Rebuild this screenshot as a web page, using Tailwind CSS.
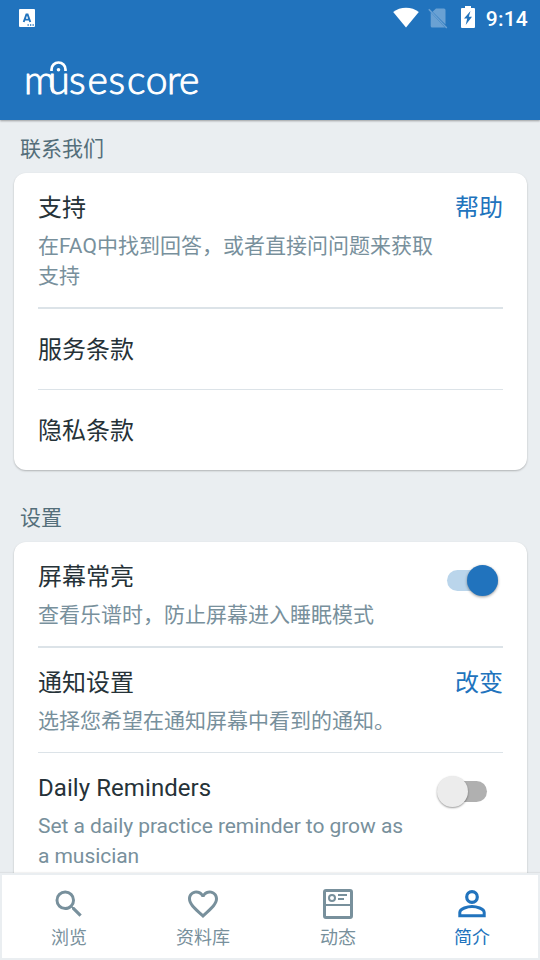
<!DOCTYPE html>
<html lang="zh-CN">
<head>
<meta charset="utf-8">
<title>MuseScore</title>
<script src="https://cdn.jsdelivr.net/npm/@tailwindcss/browser@4"></script>
</head>
<body class="bg-[#eaeef1] font-['Roboto','Noto_Sans_CJK_SC',sans-serif] text-[#263238]">
<div class="w-[540px] h-[960px] flex flex-col overflow-hidden">
  <header class="h-[120px] shrink-0 bg-[#2173bd] shadow-[0_1px_2px_rgba(0,0,0,0.35)] z-10">
    <div class="h-9 flex items-center justify-between pl-[19px] pr-3">
      <svg class="w-4 h-[18px]" viewBox="0 0 16 18"><rect width="16" height="18" rx="1" fill="#fff"/><path d="M4.700 13 7.400 5.500h1.200L11.300 13M5.900 10.600h4.200" fill="none" stroke="#2173bd" stroke-width="1.900"/><path d="M8.500 16h1.300M11 16h1.300M13.500 16h1.300" stroke="#2173bd" stroke-width="1.500"/></svg>
      <div class="flex items-center">
        <svg class="w-[26px] h-[21px] -mt-px" viewBox="0 0 26 21"><path d="M13 20.500.200 5C7-.8 19-.8 25.800 5Z" fill="#fff"/></svg>
        <svg class="w-5 h-[22px] ml-[9px]" viewBox="0 0 20 22"><path d="M8 1.500h8a1.500 1.500 0 0 1 1.500 1.500v14.500L4.500 4.700ZM2.700 5.200 17 20.500H4.200a1.500 1.500 0 0 1-1.500-1.500Z" fill="#6aa1d3"/><path d="M.8 2.200 18.800 21" stroke="#6aa1d3" stroke-width="1.500"/></svg>
        <svg class="w-[14px] h-[22px] ml-[13px] -mt-0.5" viewBox="0 0 14 22"><path d="M4 0h6v2h3q1 0 1 1v18q0 1-1 1H1q-1 0-1-1V3q0-1 1-1h3Z" fill="#fff"/><path d="M9.500 5 3 12.500h3.200l-1.500 6.500L11 10.800H7.800Z" fill="#2173bd"/></svg>
        <span class="ml-[11px] mt-px text-[21px] leading-9 font-medium text-white tracking-[0.2px]">9:14</span>
      </div>
    </div>
    <svg class="block w-[190px] h-[60px] ml-[22px] mt-3 overflow-visible" viewBox="22 48 190 60" fill="#fff" font-family="Lato, sans-serif" font-weight="300" font-size="39">
      <text x="24 48.200 69 87.500 108.500 127 145.700 167 179" y="94" stroke="#fff" stroke-width="1" stroke-linejoin="round">musescore</text>
      <path d="M47.800 87h2.300c.4 4 2 6.300 5 8.600h-7.300Z" fill="#2173bd"/>
      <path d="M51.500 71v-1.500a7 7 0 0 1 14 0V71" fill="none" stroke="#fff" stroke-width="2.700"/>
      <circle cx="58.500" cy="69.700" r="1.800"/>
    </svg>
  </header>

  <main class="flex-1 min-h-0 overflow-hidden pl-[14px] pr-[13px]">
    <h2 class="mt-[14px] pl-[6px] h-[30px] leading-[30px] text-[21px] text-[#546e7a]">联系我们</h2>
    <section class="mt-[9px] h-[297px] px-6 bg-white rounded-xl shadow-[0_1px_2px_rgba(0,0,0,0.25)]">
      <div class="h-[136px] pt-[17px] border-b-2 border-[#dce3e8]">
        <div class="flex justify-between h-9 leading-9 text-[24px]"><h3>支持</h3><a class="text-[#2173bd]">帮助</a></div>
        <p class="mt-[5px] w-[405px] text-[21px] leading-[30px] text-[#78909c]">在FAQ中找到回答，或者直接问问题来获取支持</p>
      </div>
      <div class="h-[81px] border-b border-[#dce3e8] text-[24px] leading-[82px]">服务条款</div>
      <div class="h-20 text-[24px] leading-[82px]">隐私条款</div>
    </section>
    <h2 class="mt-[33px] pl-[6px] h-[30px] leading-[30px] text-[21px] text-[#546e7a]">设置</h2>
    <section class="mt-[9px] h-[400px] px-6 bg-white rounded-t-xl shadow-[0_1px_2px_rgba(0,0,0,0.25)]">
      <div class="h-[106px] pt-[17px] border-b-2 border-[#dce3e8] flex justify-between">
        <div>
          <h3 class="h-9 leading-9 text-[24px]">屏幕常亮</h3>
          <p class="mt-[5px] text-[21px] leading-[30px] text-[#78909c]">查看乐谱时，防止屏幕进入睡眠模式</p>
        </div>
        <div class="mt-[11px] mr-[5px] w-[51px] h-[21px] rounded-full bg-[#bad5eb] flex items-center justify-end"><span class="w-[31px] h-[31px] shrink-0 rounded-full bg-[#2173bd] shadow-[0_1px_3px_rgba(0,0,0,0.4)]"></span></div>
      </div>
      <div class="h-[105px] pt-[17px] border-b border-[#dce3e8]">
        <div class="flex justify-between h-9 leading-9 text-[24px]"><h3>通知设置</h3><a class="text-[#2173bd]">改变</a></div>
        <p class="mt-[5px] text-[21px] leading-[30px] text-[#78909c]">选择您希望在通知屏幕中看到的通知。</p>
      </div>
      <div class="pt-[17px] flex justify-between">
        <div>
          <h3 class="h-9 leading-9 text-[24px] tracking-[0.07px]">Daily Reminders</h3>
          <p class="mt-[5px] w-[375px] text-[21px] leading-[30px] tracking-[-0.06px] text-[#78909c]">Set a daily practice reminder to grow as a musician</p>
        </div>
        <div class="mt-[11px] mr-4 w-[51px] h-[21px] shrink-0 rounded-full bg-[linear-gradient(to_right,transparent_15px,#b0b0b0_15px)] flex items-center"><span class="ml-[0.5px] w-[31px] h-[31px] shrink-0 rounded-full bg-[#ececec] shadow-[0_1px_2px_rgba(0,0,0,0.4)]"></span></div>
      </div>
    </section>
  </main>

  <nav class="h-[87px] shrink-0 border-2 border-[#eaeef1] bg-white grid grid-cols-[134px_134px_136px_132px] text-[18px] leading-6 text-[#78909c] shadow-[0_-1px_1px_rgba(0,0,0,0.05)] z-10">
    <a class="flex flex-col items-center pt-[11px]">
      <svg class="w-9 h-9" viewBox="0 0 24 24" fill="currentColor"><path d="M15.500 14h-.79l-.28-.27A6.471 6.471 0 0 0 16 9.500 6.500 6.500 0 1 0 9.500 16c1.610 0 3.090-.59 4.230-1.570l.27.28v.79l5 4.990L20.490 19l-4.990-5zm-6 0C7.010 14 5 11.990 5 9.500S7.010 5 9.500 5 14 7.010 14 9.500 11.990 14 9.500 14z"/></svg>
      <span class="mt-1">浏览</span>
    </a>
    <a class="flex flex-col items-center pt-[11px]">
      <svg class="w-9 h-9" viewBox="0 0 24 24" fill="currentColor"><path d="M16.500 3c-1.740 0-3.410.81-4.500 2.090C10.910 3.810 9.240 3 7.500 3 4.420 3 2 5.420 2 8.500c0 3.780 3.400 6.860 8.550 11.540L12 21.350l1.450-1.320C18.600 15.360 22 12.280 22 8.500 22 5.420 19.580 3 16.500 3zm-4.400 15.550l-.1.100-.1-.1C7.140 14.240 4 11.390 4 8.500 4 6.500 5.500 5 7.500 5c1.540 0 3.040.99 3.570 2.360h1.870C13.460 5.990 14.960 5 16.500 5c2 0 3.500 1.500 3.500 3.500 0 2.890-3.140 5.740-7.900 10.050z"/></svg>
      <span class="mt-1">资料库</span>
    </a>
    <a class="flex flex-col items-center pt-[11px]">
      <svg class="w-9 h-9" viewBox="0 0 36 36" fill="none" stroke="currentColor"><rect x="4.500" y="4.500" width="27" height="27" rx="1.500" stroke-width="3"/><path d="M4 19h28" stroke-width="2"/><circle cx="12" cy="12" r="3" stroke-width="2"/><path d="M18 9h9M18 13h6" stroke-width="2"/></svg>
      <span class="mt-1">动态</span>
    </a>
    <a class="flex flex-col items-center pt-[11px] text-[#2173bd]">
      <svg class="w-9 h-9" viewBox="0 0 36 36" fill="none" stroke="currentColor"><circle cx="18" cy="11" r="5.300" stroke-width="3.200"/><path d="M5.800 29.700v-3.200c0-4 8.200-6 12.200-6s12.200 2 12.200 6v3.200Z" stroke-width="3"/></svg>
      <span class="mt-1">简介</span>
    </a>
  </nav>
</div>
</body>
</html>
